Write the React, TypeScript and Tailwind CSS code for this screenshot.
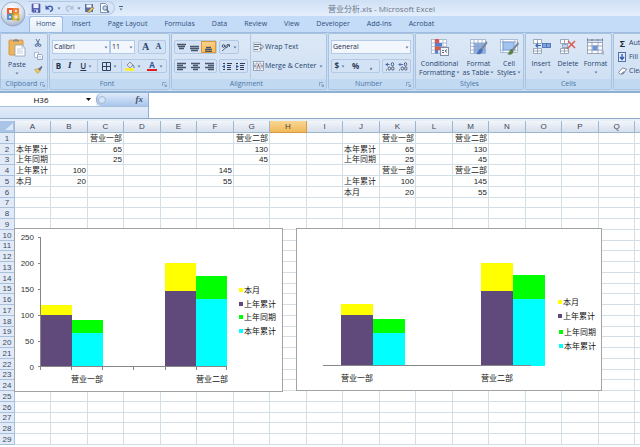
import React from "react";

const UI = "font-['Open_Sans','Noto_Sans_CJK_SC',sans-serif]";
const TABS = ["Home", "Insert", "Page Layout", "Formulas", "Data", "Review", "View", "Developer", "Add-Ins", "Acrobat"];
const COLUMNS = "ABCDEFGHIJKLMNOPQ".split("");

const CELLS: Record<string, string> = {
  C1: "营业一部", G1: "营业二部", K1: "营业一部", M1: "营业二部",
  A2: "本年累计", C2: "65", G2: "130", J2: "本年累计", K2: "65", M2: "130",
  A3: "上年同期", C3: "25", G3: "45", J3: "上年同期", K3: "25", M3: "45",
  A4: "上年累计", B4: "100", F4: "145", K4: "营业一部", M4: "营业二部",
  A5: "本月", B5: "20", F5: "55", J5: "上年累计", K5: "100", M5: "145",
  J6: "本月", K6: "20", M6: "55",
};

function Caret({ className = "" }: { className?: string }) {
  return (
    <svg className={`h-[3px] w-[4px] shrink-0 ${className}`} viewBox="0 0 4 3" aria-hidden="true">
      <path d="M0.500 0.500h3L2 2.500z" fill="#6279a0" />
    </svg>
  );
}

function OfficeLogo() {
  return (
    <svg className="h-[27px] w-[27px]" viewBox="0 0 27 27" aria-hidden="true">
      <defs>
        <radialGradient id="orb" cx="45%" cy="30%" r="75%">
          <stop offset="0" stopColor="#ffffff" />
          <stop offset="0.55" stopColor="#dde4ee" />
          <stop offset="1" stopColor="#9cabc3" />
        </radialGradient>
      </defs>
      <circle cx="13" cy="14" r="12" fill="url(#orb)" stroke="#8fa2c0" strokeWidth="0.8" />
      <g fill="none" strokeWidth="2.200" strokeLinejoin="round">
        <rect x="8" y="9" width="5" height="5" stroke="#e8612c" />
        <rect x="14" y="9" width="4" height="4" stroke="#f0803a" />
        <rect x="8" y="15" width="4" height="4" stroke="#5c8ed0" />
        <rect x="13.500" y="14.500" width="5" height="5" stroke="#e9b52e" />
      </g>
      <path d="M12 18v2M17 20l2-1M11 14h3" stroke="#7ea93c" strokeWidth="1.600" />
    </svg>
  );
}

function SaveIcon() {
  return (
    <svg className="h-[10px] w-[10px]" viewBox="0 0 10 10" aria-hidden="true">
      <path d="M1 1h8v8.500H2L1 8.500z" fill="#5a63b4" stroke="#3f4a94" strokeWidth="0.6" />
      <rect x="2.500" y="1" width="5" height="4" fill="#eef1fb" />
      <rect x="3" y="6.500" width="4" height="3" fill="#c9d0ea" />
      <rect x="3.500" y="7" width="1.300" height="2" fill="#303a80" />
    </svg>
  );
}

function UndoIcon({ redo = false }: { redo?: boolean }) {
  return (
    <svg className="h-[9px] w-[9px]" viewBox="0 0 9 9" aria-hidden="true">
      <g transform={redo ? "translate(9 0) scale(-1 1)" : undefined}>
        <path d="M2 3.800C4 1.500 7.500 2 7.500 4.500c0 1.500-1 2.500-2.500 3" fill="none" stroke={redo ? "#b3c2da" : "#3c5fae"} strokeWidth="1.500" />
        <path d="M0.500 1v4.500H5z" fill={redo ? "#b3c2da" : "#3c5fae"} />
      </g>
    </svg>
  );
}

function SaveAsIcon() {
  return (
    <svg className="h-[10px] w-[11px]" viewBox="0 0 11 10" aria-hidden="true">
      <path d="M1 1h8v8H1z" fill="#5e6f9e" />
      <rect x="2.500" y="1.500" width="5" height="3" fill="#f3f6fc" />
      <path d="M3 9l5-5 2 1-4 4.500z" fill="#e8c66a" stroke="#6c5a3c" strokeWidth="0.500" />
    </svg>
  );
}

function PreviewIcon() {
  return (
    <svg className="h-[10px] w-[11px]" viewBox="0 0 11 10" aria-hidden="true">
      <path d="M1.500 0.500h5l2 2v7h-7z" fill="#fff" stroke="#8090ac" />
      <circle cx="6" cy="5" r="2.200" fill="#c5dcf2" stroke="#566b8c" strokeWidth="0.900" />
      <path d="M7.500 6.500L10 9.500" stroke="#566b8c" strokeWidth="1.400" />
    </svg>
  );
}

function PasteIcon() {
  return (
    <svg className="h-[19px] w-[18px]" viewBox="0 0 18 19" aria-hidden="true">
      <rect x="1" y="2" width="14" height="15" rx="1" fill="#eeb558" stroke="#c98a35" strokeWidth="0.800" />
      <path d="M5 3.500V2h1.500C7 0.500 9 0.500 9.500 2H11v1.500z" fill="#7d8798" />
      <path d="M7 7h7l3 3v8H7z" fill="#fff" stroke="#8d9db8" strokeWidth="0.800" />
      <path d="M14 7v3h3M9 11h5M9 13h6M9 15h6" fill="none" stroke="#b4c2d8" strokeWidth="0.800" />
    </svg>
  );
}

function CutIcon() {
  return (
    <svg className="h-[8px] w-[8px]" viewBox="0 0 8 8" aria-hidden="true">
      <path d="M2 0l3 5.500M5.500 0L3 5.500" stroke="#5e7396" fill="none" />
      <circle cx="2.300" cy="6.300" r="1.200" fill="none" stroke="#49669c" />
      <circle cx="5.700" cy="6.300" r="1.200" fill="none" stroke="#49669c" />
    </svg>
  );
}

function CopyIcon() {
  return (
    <svg className="h-[8px] w-[9px]" viewBox="0 0 9 8" aria-hidden="true">
      <path d="M0.500 0.500h4v5h-4z" fill="#fff" stroke="#9aadcc" strokeWidth="0.800" />
      <path d="M3.500 2.500h4l1 1v4h-5z" fill="#fff" stroke="#7f95ba" strokeWidth="0.800" />
      <path d="M4.500 4.500h2.500M4.500 6h3" stroke="#9fb3d3" strokeWidth="0.600" />
    </svg>
  );
}

function BrushIcon() {
  return (
    <svg className="h-[8px] w-[9px]" viewBox="0 0 9 8" aria-hidden="true">
      <path d="M0.500 3.500l3 4 3-2.500-2.500-2.500z" fill="#efc95e" stroke="#b39240" strokeWidth="0.500" />
      <path d="M4 3l3.500-3 1 1L6 4.800z" fill="#5f6f87" />
    </svg>
  );
}

function BordersIcon() {
  return (
    <svg className="h-[9px] w-[9px]" viewBox="0 0 9 9" aria-hidden="true">
      <path d="M0.500 0.500h8v8h-8zM4.500 0.500v8M0.500 4.500h8" fill="none" stroke="#2f4365" />
    </svg>
  );
}

function FillIcon() {
  return (
    <svg className="h-[10px] w-[10px]" viewBox="0 0 10 10" aria-hidden="true">
      <path d="M2 4l3-3 3 3-3 3z" fill="#dbe3f0" stroke="#6b7c9b" strokeWidth="0.800" />
      <path d="M8 4c1 1 1 2 1 3" stroke="#4b6cae" fill="none" />
      <rect x="0" y="7" width="9" height="3" fill="#f6ee3c" />
    </svg>
  );
}

function LinesIcon({ kind }: { kind: "top" | "middle" | "bottom" | "left" | "center" | "right" }) {
  const paths = {
    top: "M0 1.500h9M1 3.500h7M2 5.500h5",
    middle: "M0 3.500h9M0 5.500h9M1 7.500h7",
    bottom: "M2 4.500h5M1 6.500h7M1 8.500h7",
    left: "M0 1.500h9M0 3.500h6M0 5.500h9M0 7.500h6",
    center: "M0 1.500h9M2 3.500h5M0 5.500h9M2 7.500h5",
    right: "M0 1.500h9M3 3.500h6M0 5.500h9M3 7.500h6",
  };
  return (
    <svg className="h-[9px] w-[9px]" viewBox="0 0 9 9" aria-hidden="true">
      <path d={paths[kind]} stroke="#4a5670" strokeWidth="1.400" />
    </svg>
  );
}

function OrientationIcon() {
  return (
    <svg className="h-[9px] w-[10px]" viewBox="0 0 10 9" aria-hidden="true">
      <path d="M1 8l7-6M6 1.500h2.500V4" fill="none" stroke="#5b6780" />
      <circle cx="2.500" cy="3" r="1.300" fill="none" stroke="#3f4c66" />
      <circle cx="5.500" cy="3.500" r="1.100" fill="none" stroke="#3f4c66" strokeWidth="0.800" />
    </svg>
  );
}

function IndentIcon({ out = false }: { out?: boolean }) {
  return (
    <svg className="h-[9px] w-[10px]" viewBox="0 0 10 9" aria-hidden="true">
      <path d="M1 1.500h2M5 1.500h5M5 3.500h4M5 5.500h4M1 7.500h2M5 7.500h4" stroke="#2f3b55" strokeWidth="1.200" />
      <path d={out ? "M0 4.500l3-2v4z" : "M4 4.500l-3-2v4z"} fill="#3d63ae" />
    </svg>
  );
}

function WrapIcon() {
  return (
    <svg className="h-[10px] w-[11px]" viewBox="0 0 11 10" aria-hidden="true">
      <rect x="0.500" y="0.500" width="7" height="9" fill="#e9edf3" stroke="#a5afbf" strokeWidth="0.600" />
      <path d="M1 2.500h7M1 4.500h5M1 7.500h4" stroke="#6d7888" />
      <path d="M8 3c3 0 3 3.500 0 3.500H7M8.500 5L6.500 6.500l2 1.500" fill="none" stroke="#7d8899" />
    </svg>
  );
}

function MergeIcon() {
  return (
    <svg className="h-[10px] w-[11px]" viewBox="0 0 11 10" aria-hidden="true">
      <rect x="0.500" y="0.500" width="10" height="9" fill="#fff" stroke="#8491aa" strokeWidth="0.800" />
      <path d="M0.500 3h10M0.500 7h10M4 0.500V3M7 0.500V3M4 7v2.500M7 7v2.500" stroke="#8491aa" strokeWidth="0.700" />
      <path d="M1 5h2.500M10 5H7.500" stroke="#2e4f94" />
      <path d="M5.500 3.500L4.500 6.500M5.500 3.500l1 3" stroke="#7b3a3a" strokeWidth="0.800" />
    </svg>
  );
}

function DecimalIcon({ less = false }: { less?: boolean }) {
  return (
    <svg className="h-[9px] w-[10px]" viewBox="0 0 10 9" aria-hidden="true">
      <path d={less ? "M5 2.500h-4M2.500 1L1 2.500 2.500 4" : "M0.500 2.500h4M3 1L1 2.500 3 4"} fill="none" stroke="#3f62a8" strokeWidth="0.900" />
      <ellipse cx="7.500" cy="2.300" rx="1.200" ry="1.700" fill="none" stroke="#46536e" strokeWidth="0.900" />
      <ellipse cx="4.300" cy="6.500" rx="1.200" ry="1.700" fill="none" stroke="#46536e" strokeWidth="0.900" />
      <ellipse cx="7.800" cy="6.500" rx="1.200" ry="1.700" fill="none" stroke="#46536e" strokeWidth="0.900" />
      <path d="M1 8h1" stroke="#46536e" />
    </svg>
  );
}

function ConditionalIcon() {
  return (
    <svg className="h-[18px] w-[19px]" viewBox="0 0 19 18" aria-hidden="true">
      <rect x="1.500" y="1.500" width="15" height="14" fill="#fff" stroke="#9fb0cc" strokeWidth="0.800" />
      <path d="M1.500 5h15M1.500 8.500h15M1.500 12h15M5 1.500v14M9 1.500v14M13 1.500v14" stroke="#9fb0cc" strokeWidth="0.800" />
      <path d="M5 1h4v4H5z" fill="#d9574a" />
      <path d="M5 5h7v3.500H5z" fill="#5b7fc6" />
      <path d="M5 8.500h5V12H5z" fill="#d9574a" />
      <path d="M5 12h3v3.500H5z" fill="#5b7fc6" />
      <rect x="10.500" y="9.500" width="8" height="8" fill="#f3f5f9" stroke="#67748c" strokeWidth="0.800" />
      <path d="M12 12.500h2M12 14.500h2M17 11.500l-2 1.500 2 1.500" fill="none" stroke="#4c5a75" strokeWidth="0.900" />
    </svg>
  );
}

function TableFormatIcon() {
  return (
    <svg className="h-[18px] w-[19px]" viewBox="0 0 19 18" aria-hidden="true">
      <rect x="1.500" y="1.500" width="15" height="14" fill="#fff" stroke="#9fb0cc" strokeWidth="0.800" />
      <path d="M5 5h11.500v10.500H5z" fill="#8fb0e2" />
      <path d="M1.500 5h15M1.500 8.500h15M1.500 12h15M5 1.500v14M9 1.500v14M13 1.500v14" stroke="#8ba2c8" strokeWidth="0.800" />
      <path d="M17.500 3l-6 8 1.500 1.500L18.500 5z" fill="#7c8698" />
      <path d="M12 10.500c-3 0-2 4-5 5 3 2 7 0 6.500-4z" fill="#4773b9" />
    </svg>
  );
}

function CellStylesIcon() {
  return (
    <svg className="h-[18px] w-[19px]" viewBox="0 0 19 18" aria-hidden="true">
      <rect x="0.500" y="1.500" width="17" height="13" fill="#fff" stroke="#9fb0cc" strokeWidth="0.800" />
      <path d="M0.500 4h17M0.500 12h17M3 1.500v13M15 1.500v13" stroke="#9fb0cc" strokeWidth="0.800" />
      <rect x="3" y="4" width="11" height="8" fill="#a3c3f1" stroke="#6e95d4" strokeWidth="0.800" />
      <path d="M18 4l-6 7 1.500 1.500L19 6z" fill="#7c8698" />
      <path d="M12 11c-3 0-2 4-5 5 3 2 7 0 6.500-4z" fill="#5a8148" />
    </svg>
  );
}

function CellsIcon({ kind }: { kind: "insert" | "delete" | "format" }) {
  return (
    <svg className="h-[18px] w-[19px]" viewBox="0 0 19 18" aria-hidden="true">
      {kind === "format" ? (
        <g>
          <rect x="1.500" y="4.500" width="15" height="11" fill="#fff" stroke="#8795af" strokeWidth="0.800" />
          <path d="M1.500 8h15M1.500 12h15M6 4.500v11M12 4.500v11" stroke="#8795af" strokeWidth="0.800" />
          <rect x="6.500" y="7.500" width="5" height="5" fill="#6c93d6" />
          <path d="M1.500 2h15M1.500 0.500v3M16.500 0.500v3M6 1v2M12 1v2" stroke="#66758f" strokeWidth="0.900" />
          <path d="M16 12l2 1v4l-3-1z" fill="#aab4c6" />
        </g>
      ) : (
        <g>
          <path d="M1.500 1.500h8v4h-8zM5.500 1.500v4M1.500 10.500h8v5h-8zM5.500 10.500v5M1.500 13h8" fill="#fff" stroke="#8795af" strokeWidth="0.800" />
          {kind === "insert" ? (
            <g>
              <rect x="10.500" y="5.500" width="8" height="4" fill="#7ea3df" stroke="#4569ad" strokeWidth="0.800" />
              <path d="M14.500 5.500v4" stroke="#4569ad" strokeWidth="0.800" />
              <path d="M9 7.500H4M6 5.500l-2 2 2 2" fill="none" stroke="#3a62ae" strokeWidth="1.200" />
            </g>
          ) : (
            <g>
              <path d="M3.500 6.500h5v3h-5z" fill="#c8d8f2" stroke="#8795af" strokeWidth="0.800" />
              <path d="M9 3l7 7M16 3l-8 8" stroke="#dc5a52" strokeWidth="1.500" />
            </g>
          )}
        </g>
      )}
    </svg>
  );
}

function FillDownIcon() {
  return (
    <svg className="h-[10px] w-[8px]" viewBox="0 0 8 10" aria-hidden="true">
      <rect x="0.500" y="0.500" width="7" height="9" fill="#dfe9f8" stroke="#5571a8" />
      <path d="M4 2v5M2 5l2 2.500L6 5" fill="none" stroke="#2f5cb0" strokeWidth="1.300" />
    </svg>
  );
}

function EraserIcon() {
  return (
    <svg className="h-[8px] w-[9px]" viewBox="0 0 9 8" aria-hidden="true">
      <path d="M0.500 5.500l4-4.500 4 1-3.500 5h-3z" fill="#fff" stroke="#65738e" strokeWidth="0.800" />
      <path d="M3 7l2-2.500 2 0.500-2 2z" fill="#7c889f" />
    </svg>
  );
}

function IconButton({ label, children, className = "" }: { label: string; children: React.ReactNode; className?: string }) {
  return (
    <button type="button" aria-label={label} className={`flex h-full flex-1 items-center justify-center gap-[2px] ${className}`}>
      {children}
    </button>
  );
}

function ButtonStrip({ children, className }: { children: React.ReactNode; className: string }) {
  return <div className={`flex h-[14px] shrink-0 items-center rounded-[2px] border border-[#b2c8e4] bg-[#d3e2f4] ${className}`}>{children}</div>;
}

function Group({ title, launcher = false, className, children }: { title: string; launcher?: boolean; className: string; children: React.ReactNode }) {
  return (
    <section aria-label={title} className={`flex shrink-0 flex-col overflow-hidden rounded-[2px] border border-[#a9c3e0] bg-gradient-to-b from-[#dce8f6] to-[#cddff3] ${className}`}>
      <div className="flex h-[45px] overflow-hidden px-[2px]">{children}</div>
      <div className="flex h-[10px] items-center bg-[#c1d9f1] px-[2px] text-[#4f76a8]">
        <span className="flex-1 text-center leading-[10px]">{title}</span>
        {launcher && (
          <button type="button" aria-label={`${title} options`}>
            <svg className="h-[5px] w-[5px]" viewBox="0 0 5 5" aria-hidden="true">
              <path d="M0.500 4V0.500H4M2 2l2.500 2.500M4.500 2.500v2h-2" fill="none" stroke="#7d97bb" strokeWidth="0.800" />
            </svg>
          </button>
        )}
      </div>
    </section>
  );
}

function BigButton({ icon, lines, className, caretBelow = false }: { icon: React.ReactNode; lines: string[]; className: string; caretBelow?: boolean }) {
  return (
    <button type="button" className={`flex shrink-0 flex-col items-center pt-[4px] ${className}`}>
      {icon}
      {lines.map((line, i) => (
        <span key={line} className="flex items-center gap-px whitespace-nowrap leading-[9px] first-of-type:mt-[3px]">
          {line}
          {!caretBelow && i === lines.length - 1 && <Caret />}
        </span>
      ))}
      {caretBelow && <Caret className="mt-[3px]" />}
    </button>
  );
}

function Combo({ label, value, className }: { label: string; value: string; className: string }) {
  return (
    <div className={`relative shrink-0 ${className}`}>
      <select aria-label={label} className="h-[14px] w-full appearance-none border border-[#b5cae6] bg-[#f2f7fd] pl-px text-[#1e2c44] outline-none">
        <option>{value}</option>
      </select>
      <Caret className="pointer-events-none absolute right-[2px] top-[6px]" />
    </div>
  );
}

function Ribbon() {
  return (
    <div className="flex gap-px overflow-hidden border-b-2 border-t border-b-[#8db0d3] border-t-[#9dbce0] bg-[#c9dcf2] pb-px text-[#27446f]">
      <Group title="Clipboard" launcher className="w-[48px]">
        <BigButton icon={<PasteIcon />} lines={["Paste"]} className="w-[28px]" caretBelow />
        <div className="flex flex-1 flex-col items-center justify-around py-[2px]">
          <button type="button" aria-label="Cut"><CutIcon /></button>
          <button type="button" aria-label="Copy"><CopyIcon /></button>
          <button type="button" aria-label="Format Painter"><BrushIcon /></button>
        </div>
      </Group>

      <Group title="Font" launcher className="w-[121px]">
        <div className="flex flex-1 flex-col gap-[5px] pt-[6px]">
          <div className="flex">
            <Combo label="Font name" value="Calibri" className="w-[58px]" />
            <Combo label="Font size" value="11" className="w-[25px]" />
            <ButtonStrip className="ml-[3px] w-[28px]">
              <IconButton label="Grow font"><span className="font-['Liberation_Serif',serif] text-[10px] font-bold leading-none">A</span></IconButton>
              <IconButton label="Shrink font"><span className="font-['Liberation_Serif',serif] text-[8px] font-bold leading-none">A</span></IconButton>
            </ButtonStrip>
          </div>
          <ButtonStrip className="w-full text-[#22314d]">
            <IconButton label="Bold"><b className="text-[8px]">B</b></IconButton>
            <IconButton label="Italic"><i className="font-['Liberation_Serif',serif] text-[9px] font-bold">I</i></IconButton>
            <IconButton label="Underline" className="grow-[2] border-r border-[#b2c8e4]"><u className="text-[8px] font-semibold">U</u><Caret /></IconButton>
            <IconButton label="Borders" className="grow-[2] border-r border-[#b2c8e4]"><BordersIcon /><Caret /></IconButton>
            <IconButton label="Fill color" className="grow-[2]"><FillIcon /><Caret /></IconButton>
            <IconButton label="Font color" className="grow-[2]">
              <span className="border-b-2 border-[#e01f26] px-[2px] text-[8px] font-bold leading-[8px] text-[#33559a]">A</span><Caret />
            </IconButton>
          </ButtonStrip>
        </div>
      </Group>

      <Group title="Alignment" launcher className="w-[156px]">
        <div className="flex w-[77px] shrink-0 flex-col gap-[5px] border-r border-[#b2c8e4] pt-[6px]">
          <div className="flex gap-[2px]">
            <ButtonStrip className="w-[43px]">
              <IconButton label="Top align"><LinesIcon kind="top" /></IconButton>
              <IconButton label="Middle align"><LinesIcon kind="middle" /></IconButton>
              <IconButton label="Bottom align" className="border border-[#d99a3c] bg-gradient-to-b from-[#fbd08a] to-[#fdbb4c]"><LinesIcon kind="bottom" /></IconButton>
            </ButtonStrip>
            <ButtonStrip className="w-[20px]"><IconButton label="Orientation"><OrientationIcon /><Caret /></IconButton></ButtonStrip>
          </div>
          <div className="flex gap-[2px]">
            <ButtonStrip className="w-[43px]">
              <IconButton label="Align left"><LinesIcon kind="left" /></IconButton>
              <IconButton label="Center"><LinesIcon kind="center" /></IconButton>
              <IconButton label="Align right"><LinesIcon kind="right" /></IconButton>
            </ButtonStrip>
            <ButtonStrip className="w-[29px]">
              <IconButton label="Decrease indent"><IndentIcon out /></IconButton>
              <IconButton label="Increase indent"><IndentIcon /></IconButton>
            </ButtonStrip>
          </div>
        </div>
        <div className="flex flex-col gap-[5px] pl-[2px] pt-[6px]">
          <button type="button" className="flex h-[14px] items-center gap-px whitespace-nowrap"><WrapIcon />Wrap Text</button>
          <button type="button" className="flex h-[14px] items-center gap-px whitespace-nowrap"><MergeIcon />Merge &amp; Center<Caret className="ml-[2px]" /></button>
        </div>
      </Group>

      <Group title="Number" launcher className="w-[86px]">
        <div className="flex flex-1 flex-col gap-[5px] pt-[6px]">
          <Combo label="Number format" value="General" className="w-full" />
          <div className="flex justify-between">
            <ButtonStrip className="w-[49px] text-[8px] font-bold text-[#2f3d59]">
              <IconButton label="Accounting format">$<Caret /></IconButton>
              <IconButton label="Percent style">%</IconButton>
              <IconButton label="Comma style">,</IconButton>
            </ButtonStrip>
            <ButtonStrip className="w-[29px]">
              <IconButton label="Increase decimal"><DecimalIcon /></IconButton>
              <IconButton label="Decrease decimal"><DecimalIcon less /></IconButton>
            </ButtonStrip>
          </div>
        </div>
      </Group>

      <Group title="Styles" className="w-[109px]">
        <BigButton icon={<ConditionalIcon />} lines={["Conditional", "Formatting"]} className="w-[43px]" />
        <BigButton icon={<TableFormatIcon />} lines={["Format", "as Table"]} className="w-[35px]" />
        <BigButton icon={<CellStylesIcon />} lines={["Cell", "Styles"]} className="w-[26px]" />
      </Group>

      <Group title="Cells" className="w-[87px]">
        <BigButton icon={<CellsIcon kind="insert" />} lines={["Insert"]} className="w-[26px]" caretBelow />
        <BigButton icon={<CellsIcon kind="delete" />} lines={["Delete"]} className="w-[28px]" caretBelow />
        <BigButton icon={<CellsIcon kind="format" />} lines={["Format"]} className="w-[27px]" caretBelow />
      </Group>

      <Group title="" className="w-[120px]">
        <div className="flex flex-col gap-[4px] pl-[2px] pt-[4px]">
          <button type="button" className="flex h-[10px] items-center gap-[2px]">
            <span className="w-[9px] text-center text-[9px] font-bold leading-none text-[#1d2636]">Σ</span>AutoSum
          </button>
          <button type="button" className="flex h-[10px] items-center gap-[3px]"><FillDownIcon />Fill</button>
          <button type="button" className="flex h-[10px] items-center gap-[2px]"><EraserIcon />Clear</button>
        </div>
      </Group>
    </div>
  );
}

function FormulaBar() {
  return (
    <div className="flex h-[26px] border-b border-[#8fa9c8]">
      <div className="flex w-[149px] shrink-0 flex-col border-r border-[#8fb0d6] bg-gradient-to-b from-[#f4f8fd] to-[#d3e2f5]">
        <div className="flex h-[14px] border-b border-[#a5bfdf]">
          <div className="flex w-[96px] items-center bg-white">
            <input aria-label="Name box" defaultValue="H36" className="w-[82px] bg-transparent text-center text-[8px] text-black outline-none" />
            <svg className="ml-[4px] h-[3px] w-[5px]" viewBox="0 0 5 3" aria-hidden="true"><path d="M0 0h5L2.500 3z" fill="#111" /></svg>
          </div>
          <div className="flex flex-1 items-center justify-between rounded-l-full border-l border-[#8aa5c9] bg-gradient-to-b from-[#dfeafa] to-[#a9c6ec] pl-px pr-[5px]">
            <span className="h-[8px] w-[8px] rounded-full border border-[#a3b9d6] bg-[#d7e4f5]" />
            <button type="button" aria-label="Insert function" className="font-['Liberation_Serif',serif] text-[9px] font-bold italic leading-none text-[#41516e]">fx</button>
          </div>
        </div>
      </div>
      <input aria-label="Formula bar" className="min-w-0 flex-1 bg-white px-[2px] text-[8px] outline-none" />
    </div>
  );
}

function SheetGrid() {
  const rows = Array.from({ length: 29 }, (_, i) => i + 1);
  return (
    <table className="w-full table-fixed border-separate border-spacing-0 font-['Liberation_Sans','Noto_Sans_CJK_SC',sans-serif] text-[8px] leading-[9px] text-[#1c1c1c]">
      <colgroup>
        <col className="w-[15px]" />
        {COLUMNS.map((c, i) => <col key={c} className={i % 2 === 0 ? "w-[36px]" : "w-[37px]"} />)}
        <col />
      </colgroup>
      <thead>
        <tr className="h-[12px]">
          <td className="border-b border-r border-[#9eb6ce] bg-[#a9c4e9] p-0">
            <svg className="ml-auto h-[9px] w-[10px]" viewBox="0 0 10 9" aria-hidden="true"><path d="M9 1v7H1z" fill="#dce8f7" /></svg>
          </td>
          {COLUMNS.map((c) => (
            <th
              key={c}
              scope="col"
              className={
                c === "H"
                  ? "border-b border-r border-[#d79a45] bg-gradient-to-b from-[#f9d793] to-[#f1b858] p-0 font-normal text-[#4a4337]"
                  : "border-b border-r border-[#9eb6ce] bg-gradient-to-b from-[#f3f6fb] to-[#d6dfec] p-0 font-normal text-[#3c4656]"
              }
            >
              {c}
            </th>
          ))}
          <td className="border-b border-[#9eb6ce] bg-gradient-to-b from-[#f3f6fb] to-[#d6dfec] p-0" />
        </tr>
      </thead>
      <tbody>
        {rows.map((r) => (
          <tr key={r} className={r % 4 === 3 ? "h-[10px]" : "h-[11px]"}>
            <th scope="row" className="border-b border-r border-[#a9c0dc] bg-[#e1eaf6] p-0 text-center font-normal text-[#3a4a66]">{r}</th>
            {COLUMNS.map((c) => {
              const value = CELLS[`${c}${r}`];
              const alignLeft = c === "A" || c === "J";
              return (
                <td key={c} className={`whitespace-nowrap border-b border-r border-[#d3dfe6] bg-white px-px py-0 ${alignLeft ? "text-left" : "text-right"}`}>
                  {value}
                </td>
              );
            })}
            <td className="border-b border-[#d3dfe6] bg-white p-0" />
          </tr>
        ))}
      </tbody>
    </table>
  );
}

type Bar = { x: number; w: number; segments: { y: number; h: number; fill: string }[] };
type Legend = { x: number; y: number; fill: string; label: string };

const PURPLE = "#604a7b";
const YELLOW = "#ffff00";
const GREEN = "#00ff00";
const CYAN = "#00ffff";

function Chart({ title, width, height, bars, legend, categories, children }: {
  title: string; width: number; height: number; bars: Bar[]; legend: Legend[]; categories: { x: number; y: number; label: string }[]; children: React.ReactNode;
}) {
  return (
    <svg
      role="img"
      aria-label={title}
      width={width}
      height={height}
      viewBox={`0 0 ${width} ${height}`}
      className="box-content block border border-[#a3a3a3] bg-white font-['Liberation_Sans','Noto_Sans_CJK_SC',sans-serif] text-[8px]"
    >
      {bars.map((b) => b.segments.map((s) => <rect key={`${b.x}-${s.y}`} x={b.x} y={s.y} width={b.w} height={s.h} fill={s.fill} />))}
      {children}
      {categories.map((c) => <text key={c.label} x={c.x} y={c.y} textAnchor="middle" fill="#111">{c.label}</text>)}
      {legend.map((l) => (
        <g key={l.label}>
          <rect x={l.x} y={l.y - 2} width="4" height="4" fill={l.fill} />
          <text x={l.x + 5} y={l.y + 3} fill="#111">{l.label}</text>
        </g>
      ))}
    </svg>
  );
}

function AxisChart() {
  return (
    <Chart
      title="营业分析 1"
      width={267}
      height={162}
      bars={[
        { x: 26, w: 31, segments: [{ y: 76, h: 10, fill: YELLOW }, { y: 86, h: 52, fill: PURPLE }] },
        { x: 57, w: 31, segments: [{ y: 91, h: 13, fill: GREEN }, { y: 104, h: 34, fill: CYAN }] },
        { x: 150, w: 31, segments: [{ y: 34, h: 28, fill: YELLOW }, { y: 62, h: 76, fill: PURPLE }] },
        { x: 181, w: 31, segments: [{ y: 47, h: 23, fill: GREEN }, { y: 70, h: 68, fill: CYAN }] },
      ]}
      categories={[{ x: 72, y: 153, label: "营业一部" }, { x: 197, y: 153, label: "营业二部" }]}
      legend={[
        { x: 224, y: 61, fill: YELLOW, label: "本月" },
        { x: 224, y: 75, fill: PURPLE, label: "上年累计" },
        { x: 224, y: 88, fill: GREEN, label: "上年同期" },
        { x: 224, y: 102, fill: CYAN, label: "本年累计" },
      ]}
    >
      <path d="M25.500 8v133M23 8.500h3M23 34.500h3M23 60.500h3M23 86.500h3M23 112.500h3M23 137.500h189M56.500 138v3M87.500 138v3M118.500 138v3M150.500 138v3M181.500 138v3M211.500 138v3" fill="none" stroke="#868686" />
      {[250, 200, 150, 100, 50, 0].map((v, i) => (
        <text key={v} x={19} y={11 + i * 26} textAnchor="end" fill="#333">{v}</text>
      ))}
    </Chart>
  );
}

function PlainChart() {
  return (
    <Chart
      title="营业分析 2"
      width={304}
      height={161}
      bars={[
        { x: 44, w: 32, segments: [{ y: 75, h: 11, fill: YELLOW }, { y: 86, h: 51, fill: PURPLE }] },
        { x: 76, w: 32, segments: [{ y: 90, h: 14, fill: GREEN }, { y: 104, h: 33, fill: CYAN }] },
        { x: 184, w: 32, segments: [{ y: 34, h: 28, fill: YELLOW }, { y: 62, h: 75, fill: PURPLE }] },
        { x: 216, w: 32, segments: [{ y: 46, h: 24, fill: GREEN }, { y: 70, h: 67, fill: CYAN }] },
      ]}
      categories={[{ x: 60, y: 152, label: "营业一部" }, { x: 200, y: 152, label: "营业二部" }]}
      legend={[
        { x: 261, y: 73, fill: YELLOW, label: "本月" },
        { x: 261, y: 87, fill: PURPLE, label: "上年累计" },
        { x: 262, y: 103, fill: GREEN, label: "上年同期" },
        { x: 262, y: 117, fill: CYAN, label: "本年累计" },
      ]}
    >
      <path d="M26 136.500h208" stroke="#868686" />
    </Chart>
  );
}

export default function App() {
  return (
    <div className={`relative flex h-screen w-full flex-col overflow-hidden bg-white text-[7px] ${UI}`}>
      <header className="bg-[#c4dcf8]">
        <div className="flex h-[16px] items-center bg-gradient-to-b from-[#cfe0f5] to-[#e4eefb] pl-[28px]">
          <div className="flex h-[14px] items-center rounded-r-full border border-l-0 border-[#b3c9e6] bg-[#d6e5f8] pl-[3px] pr-[4px]">
            <button type="button" aria-label="Save" className="mr-[4px]"><SaveIcon /></button>
            <button type="button" aria-label="Undo" className="mr-[4px] flex items-center gap-[3px]"><UndoIcon /><Caret /></button>
            <button type="button" aria-label="Redo" className="mr-[3px] flex items-center gap-[3px]"><UndoIcon redo /><Caret /></button>
            <button type="button" aria-label="Save as" className="mr-[4px]"><SaveAsIcon /></button>
            <button type="button" aria-label="Print preview"><PreviewIcon /></button>
          </div>
          <button type="button" aria-label="Customize toolbar" className="ml-[4px] flex flex-col items-center gap-px">
            <span className="h-px w-[4px] bg-[#4a5f82]" />
            <Caret />
          </button>
          <h1 className="flex-1 whitespace-nowrap pt-[2px] text-center text-[8px] leading-[10px] text-[#6a7788]">营业分析.xls - Microsoft Excel</h1>
        </div>
        <nav aria-label="Ribbon tabs" className="flex h-[16px] items-end gap-px pl-[29px] text-[#2f4f7d]">
          {TABS.map((t, i) => (
            <button
              key={t}
              type="button"
              className={
                i === 0
                  ? "h-full rounded-t-[3px] border border-b-0 border-[#9dbce0] bg-gradient-to-b from-[#f6fafe] to-[#e3edf9] px-[6px]"
                  : "h-full whitespace-nowrap px-[8px]"
              }
            >
              {t}
            </button>
          ))}
        </nav>
      </header>
      <button type="button" aria-label="Office menu" className="absolute left-0 top-0"><OfficeLogo /></button>
      <Ribbon />
      <FormulaBar />
      <div className="h-[2px] shrink-0 bg-[#e6eef8]" />
      <main className="relative flex-1">
        <SheetGrid />
        <div className="absolute left-[14px] top-[107px]"><AxisChart /></div>
        <div className="absolute left-[296px] top-[107px]"><PlainChart /></div>
      </main>
    </div>
  );
}
